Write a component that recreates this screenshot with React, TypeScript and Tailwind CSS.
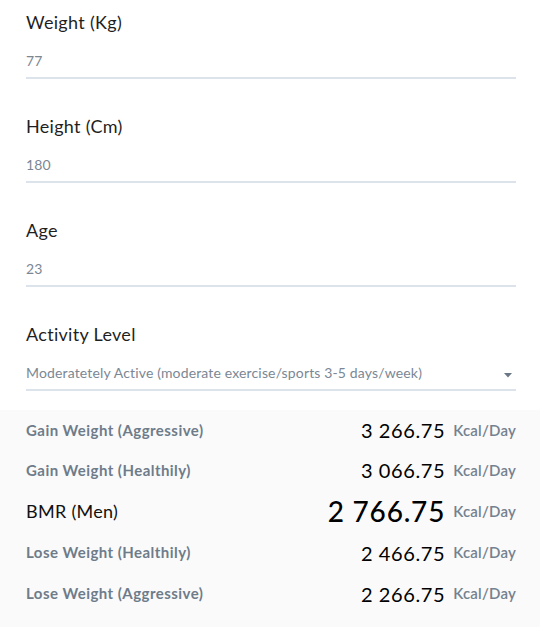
import React from "react";

const font = { fontFamily: "Lato, 'Open Sans', sans-serif" };

function Field({ label, value, select }: { label: string; value: string; select?: boolean }) {
  return (
    <div className="flex flex-col">
      <div className="text-[18px] leading-[24px] tracking-[0.3px] text-[#1f1f1f]">{label}</div>
      <div className="mt-[17px] flex items-center justify-between border-b-2 border-[#dde3eb] pb-[6px]">
        <span className="text-[14px] leading-[20px] tracking-[0.15px] text-[#7b8794]">{value}</span>
        {select && (
          <svg width="8" height="5" viewBox="0 0 8 5" className="mr-[4px] mt-[4px]">
            <path d="M0 0 L8 0 L4 4.5 Z" fill="#6b7785" />
          </svg>
        )}
      </div>
    </div>
  );
}

function Row({ label, value, big, h }: { label: string; value: string; big?: boolean; h: string }) {
  return (
    <div className={`flex items-center justify-between ${h}`}>
      {big ? (
        <span className="text-[18px] tracking-[0.3px] text-[#111]">{label}</span>
      ) : (
        <span className="text-[15px] font-bold tracking-[0.45px] text-[#6e7c8a]">{label}</span>
      )}
      <div className="flex items-center gap-[8px]">
        <span className={big ? "text-[28px] font-medium tracking-[0.8px] text-black" : "text-[20px] tracking-[0.6px] text-black"}>{value}</span>
        <span className="text-[15px] font-semibold tracking-[0.2px] text-[#74818e]">Kcal/Day</span>
      </div>
    </div>
  );
}

export default function App() {
  return (
    <div style={font} className="w-[540px] h-[627px] bg-white overflow-hidden flex flex-col">
      <div className="flex flex-col gap-[35px] pl-[26px] pr-[24px] pt-[10px]">
        <Field label="Weight (Kg)" value="77" />
        <Field label="Height (Cm)" value="180" />
        <Field label="Age" value="23" />
        <Field label="Activity Level" value="Moderatetely Active (moderate exercise/sports 3-5 days/week)" select />
      </div>
      <div className="mt-[19px] flex-1 bg-[#fafafa] pl-[26px] pr-[24px]">
        <Row h="h-[40px]" label="Gain Weight (Aggressive)" value="3 266.75" />
        <Row h="h-[40px]" label="Gain Weight (Healthily)" value="3 066.75" />
        <Row h="h-[42px]" label="BMR (Men)" value="2 766.75" big />
        <Row h="h-[41px]" label="Lose Weight (Healthily)" value="2 466.75" />
        <Row h="h-[41px]" label="Lose Weight (Aggressive)" value="2 266.75" />
      </div>
    </div>
  );
}
